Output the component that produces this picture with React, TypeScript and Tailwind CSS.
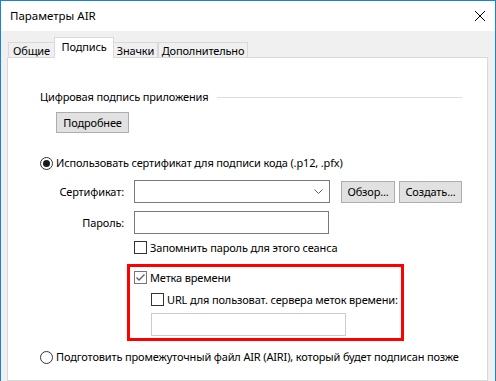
import React from "react";

const Checkbox = ({ checked = false, muted = false }: { checked?: boolean; muted?: boolean }) => (
  <span className={`w-[13px] h-[13px] shrink-0 bg-white border flex items-center justify-center ${muted ? "border-[#767676]" : "border-[#333333]"}`}>
    {checked && (
      <svg width="11" height="11" viewBox="0 0 11 11">
        <path d="M1.5 5.5 L4 8 L9.5 2.5" stroke="#606060" strokeWidth="1.3" fill="none" />
      </svg>
    )}
  </span>
);

const Radio = ({ checked = false }: { checked?: boolean }) => (
  <span className="w-[13px] h-[13px] shrink-0 rounded-full border border-[#333333] bg-white flex items-center justify-center">
    {checked && <span className="w-[7px] h-[7px] rounded-full bg-[#1a1a1a]" />}
  </span>
);

const WinButton = ({ label, className }: { label: string; className: string }) => (
  <div className={`bg-[#e1e1e1] border border-[#adadad] flex items-center justify-center whitespace-nowrap ${className}`}>
    {label}
  </div>
);

export default function App() {
  const tabs = [
    { label: "Общие", w: "w-[47px]" },
    { label: "Подпись", w: "w-[60px]", active: true },
    { label: "Значки", w: "w-[45px]" },
    { label: "Дополнительно", w: "w-[90px]" },
  ];

  return (
    <div className="w-[496px] h-[381px] overflow-hidden bg-white border-x border-t border-[#1883d7] flex flex-col font-['Noto_Sans',sans-serif] text-[11px] leading-[16px] tracking-[-0.15px] text-black whitespace-nowrap">
      <div className="h-[30px] bg-white flex items-center justify-between pl-[9px] pr-[8px] shrink-0">
        <span className="text-[11.5px] tracking-normal -mt-[1px]">Параметры AIR</span>
        <svg width="12" height="12" viewBox="0 0 12 12" className="mr-[1px]">
          <path d="M1 1 L11 11 M11 1 L1 11" stroke="#000" strokeWidth="1" />
        </svg>
      </div>

      <div className="flex-1 bg-[#f0f0f0] pl-[6px] pr-[7px] pt-[7px] flex flex-col">
        <div className="flex items-end h-[20px] pl-[1px]">
          {tabs.map((t) =>
            t.active ? (
              <div
                key={t.label}
                className={`${t.w} h-[21px] -mx-[1px] relative z-10 bg-white border-x border-t border-[#d9d9d9] flex items-center justify-center pb-[2px]`}
              >
                {t.label}
              </div>
            ) : (
              <div
                key={t.label}
                className={`${t.w} h-[16px] bg-[#f0f0f0] border-l border-t border-r border-[#d9d9d9] flex items-center justify-center`}
              >
                {t.label}
              </div>
            )
          )}
        </div>

        <div className="flex-1 bg-white border border-[#d9d9d9] -mt-px flex flex-col pl-[32px]">
          <div className="mt-[31px] flex items-center mr-[25px]">
            <span>Цифровая подпись приложения</span>
            <span className="flex-1 ml-[9px] border-t border-[#dcdcdc]" />
          </div>

          <WinButton label="Подробнее" className="mt-[7px] ml-[16px] w-[73px] h-[21px]" />

          <div className="mt-[22px] flex items-center gap-[3px]">
            <Radio checked />
            <span>Использовать сертификат для подписи кода (.p12, .pfx)</span>
          </div>

          <div className="mt-[9px] flex items-center -ml-[32px]">
            <span className="w-[117px] text-right pr-[1px]">Сертификат:</span>
            <div className="ml-[9px] w-[196px] h-[23px] bg-white border border-[#7a7a7a] flex items-center justify-end pr-[6px]">
              <svg width="9" height="6" viewBox="0 0 9 6">
                <path d="M0.5 0.5 L4.5 4.5 L8.5 0.5" stroke="#606060" strokeWidth="1" fill="none" />
              </svg>
            </div>
            <WinButton label="Обзор..." className="ml-[11px] w-[54px] h-[22px]" />
            <WinButton label="Создать..." className="ml-[4px] w-[63px] h-[22px]" />
          </div>

          <div className="mt-[8px] flex items-center -ml-[32px]">
            <span className="w-[117px] text-right pr-[1px]">Пароль:</span>
            <div className="ml-[9px] w-[195px] h-[23px] bg-white border border-[#7a7a7a]" />
          </div>

          <div className="mt-[7px] flex items-center gap-[3px] ml-[94px] h-[13px]">
            <Checkbox />
            <span>Запомнить пароль для этого сеанса</span>
          </div>

          <div className="mt-[10px] ml-[87px] w-[277px] h-[77px] border-[3px] border-[#ff0000] pl-[4px] pt-[4px] flex flex-col">
            <div className="flex items-center gap-[3px] h-[13px]">
              <Checkbox checked muted />
              <span>Метка времени</span>
            </div>
            <div className="mt-[9px] ml-[17px] flex items-center gap-[3px] h-[13px]">
              <Checkbox />
              <span>URL для пользоват. сервера меток времени:</span>
            </div>
            <div className="mt-[7px] ml-[17px] w-[195px] h-[23px] bg-white border border-[#cccccc]" />
          </div>

          <div className="mt-[8px] flex items-center gap-[3px]">
            <Radio />
            <span>Подготовить промежуточный файл AIR (AIRI), который будет подписан позже</span>
          </div>
        </div>
      </div>
    </div>
  );
}
